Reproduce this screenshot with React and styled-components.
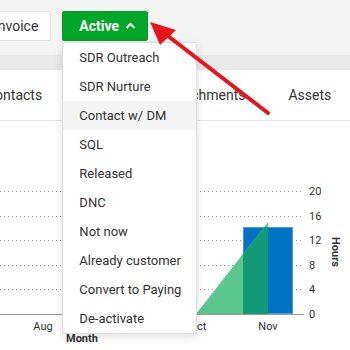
import styled, { createGlobalStyle } from 'styled-components';

const GlobalStyle = createGlobalStyle`
    html, body {
        margin: 0;
        padding: 0;
        background: #ffffff;
        font-family: Roboto, "Helvetica Neue", Arial, sans-serif;
        color: #333333;
        overflow: hidden;
    }
`;

const Page = styled.div`
    position: relative;
    width: 350px;
    height: 350px;
    overflow: hidden;
    background: #fff;
`;

const Toolbar = styled.div`
    height: 55px;
    background: #f4f4f4;
    display: flex;
    align-items: flex-start;
    gap: 11px;
    padding-top: 11px;
    box-sizing: border-box;
    margin-left: -19px;
`;

const Button = styled.button`
    height: 30px;
    box-sizing: border-box;
    border-radius: 2px;
    font-family: Roboto, "Helvetica Neue", Arial, sans-serif;
    font-size: 14px;
    display: flex;
    align-items: center;
    gap: 6px;
    padding: 0 12px;
    cursor: pointer;
    background: ${p => (p.$primary ? '#00a629' : '#ffffff')};
    color: ${p => (p.$primary ? '#ffffff' : '#333333')};
    font-weight: ${p => (p.$primary ? 700 : 400)};
    border: 1px solid ${p => (p.$primary ? '#0a9a2a' : '#e2e2e2')};

    svg {
        flex-shrink: 0;
    }
`;

const ActiveWrap = styled.div`
    position: relative;
    button {
        padding: 0 16px 0 16px;
        width: 86px;
    }
`;

const Menu = styled.ul`
    position: absolute;
    top: 31px;
    left: 0;
    width: 133px;
    margin: 0;
    padding: 0;
    list-style: none;
    background: #fff;
    border: 1px solid #dedede;
    border-radius: 2px;
    box-shadow: 0 3px 10px rgba(0, 0, 0, 0.12);
    z-index: 5;
`;

const MenuItem = styled.li`
    height: 29px;
    line-height: 29px;
    padding-left: 16px;
    font-size: 13px;
    color: #333;
    white-space: nowrap;
    background: ${p => (p.$hover ? '#f4f4f4' : 'transparent')};
`;

const Band = styled.div`
    height: 15px;
    background: #e9e9e9;
`;

const Tabs = styled.div`
    height: 50px;
    border-bottom: 1px solid #e6e6e6;
    display: flex;
    align-items: center;
    gap: 43px;
    margin-left: -14px;
    font-size: 14px;
    color: #333;
    white-space: nowrap;
`;

const Tab = styled.span`
    display: block;
`;

const ChartBox = styled.div`
    height: 229px;
`;

const Overlay = styled.svg`
    position: absolute;
    top: 0;
    left: 0;
    pointer-events: none;
    z-index: 10;
`;

const items = [
    'SDR Outreach',
    'SDR Nurture',
    'Contact w/ DM',
    'SQL',
    'Released',
    'DNC',
    'Not now',
    'Already customer',
    'Convert to Paying',
    'De-activate',
];

function Chart() {
    // chart coordinates are page coords shifted by the 121px header
    const off = 121;
    const grid = [191, 216, 240, 265, 289];
    const labels = ['20', '16', '12', '8', '4'];
    return (
        <svg width="350" height="229" viewBox={`0 ${off} 350 229`}>
            <defs>
                <clipPath id="barclip">
                    <rect x="243" y="227" width="50" height="87" />
                </clipPath>
            </defs>
            {grid.map(y => (
                <line key={y} x1="0" x2="304" y1={y + 0.5} y2={y + 0.5} stroke="#9a9a9a" strokeWidth="1" strokeDasharray="1 3" />
            ))}
            <rect x="243.5" y="227.5" width="49" height="86" fill="#0073c5" stroke="#4a9bd6" strokeWidth="1" />
            <polygon points="196,314 268,222 268,314" fill="#5cc68f" />
            <polygon points="196,314 268,222 268,314" fill="#139b78" clipPath="url(#barclip)" />
            <line x1="0" x2="304" y1="314.5" y2="314.5" stroke="#9a9a9a" strokeWidth="1" />
            {labels.map((t, i) => (
                <text key={t} x="309" y={grid[i] + 4} fontSize="11" fill="#333" fontFamily="Roboto, Arial, sans-serif">{t}</text>
            ))}
            <text x="309" y="318" fontSize="11" fill="#333" fontFamily="Roboto, Arial, sans-serif">0</text>
            <text x="336" y="252" fontSize="11" fontWeight="700" fill="#333" textAnchor="middle" fontFamily="Roboto, Arial, sans-serif" transform="rotate(90 336 252)" dy="4">Hours</text>
            <text x="43" y="330" fontSize="11" fill="#333" textAnchor="middle" fontFamily="Roboto, Arial, sans-serif">Aug</text>
            <text x="198" y="330" fontSize="11" fill="#333" textAnchor="middle" fontFamily="Roboto, Arial, sans-serif">Oct</text>
            <text x="268" y="330" fontSize="11" fill="#333" textAnchor="middle" fontFamily="Roboto, Arial, sans-serif">Nov</text>
            <text x="66" y="342" fontSize="11" fontWeight="700" fill="#333" fontFamily="Roboto, Arial, sans-serif">Month</text>
        </svg>
    );
}

export default function App() {
    return (
        <Page>
            <GlobalStyle />
            <Toolbar>
                <Button>Invoice</Button>
                <ActiveWrap>
                    <Button $primary>
                        Active
                        <svg width="11" height="8" viewBox="0 0 11 8">
                            <path d="M1.5 6 L5.5 2 L9.5 6" fill="none" stroke="#fff" strokeWidth="2" />
                        </svg>
                    </Button>
                    <Menu>
                        {items.map((it, i) => (
                            <MenuItem key={it} $hover={i === 2}>{it}</MenuItem>
                        ))}
                    </Menu>
                </ActiveWrap>
            </Toolbar>
            <Band />
            <Tabs>
                <Tab>Contacts</Tab>
                <Tab>Notes</Tab>
                <Tab>Attachments</Tab>
                <Tab>Assets</Tab>
            </Tabs>
            <ChartBox>
                <Chart />
            </ChartBox>
            <Overlay width="350" height="350" viewBox="0 0 350 350">
                <line x1="268" y1="113" x2="168" y2="36" stroke="#e8141b" strokeWidth="4" strokeLinecap="round" />
                <polygon points="150,22 160,45 176,30" fill="#e8141b" />
            </Overlay>
        </Page>
    );
}
